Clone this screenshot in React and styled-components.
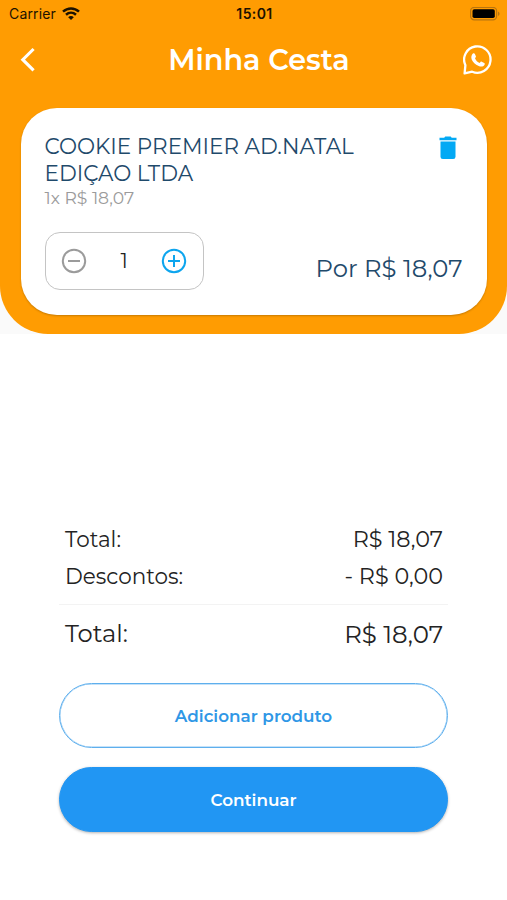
import React, { useState } from 'react'
import styled, { createGlobalStyle } from 'styled-components'

const GlobalStyle = createGlobalStyle`
    * {
        box-sizing: border-box;
    }
    body {
        margin: 0;
        background-color: #fff;
        font-family: Montserrat, Inter, "Open Sans", sans-serif;
    }
    button {
        font-family: inherit;
        padding: 0;
        border: none;
        background: none;
        cursor: pointer;
    }
    svg {
        display: block;
    }
`;

const Container = styled.div`
    width: 507px;
    height: 900px;
    overflow: hidden;
    display: flex;
    flex-direction: column;
`;

/* ---------- HEADER ---------- */
const HeaderArea = styled.div`
    height: 334px;
    background-color: #fafafa;
`;

const Header = styled.header`
    height: 334px;
    background-color: #ff9c02;
    border-radius: 0 0 48px 48px;
`;

const StatusBar = styled.div`
    height: 28px;
    padding: 0 7px 0 9px;
    display: grid;
    grid-template-columns: 1fr auto 1fr;
    align-items: center;
    color: #1c1200;
    font-family: Inter, sans-serif;
    font-size: 14px;
    line-height: 28px;
`;

const Carrier = styled.div`
    display: flex;
    align-items: center;
    gap: 6px;
    letter-spacing: 0.15px;
`;

const Clock = styled.div`
    font-weight: 600;
    letter-spacing: 0.4px;
`;

const Battery = styled.div`
    display: flex;
    justify-content: flex-end;
`;

const NavBar = styled.div`
    height: 80px;
    padding: 0 14px 16px 20px;
    display: grid;
    grid-template-columns: 40px 1fr 40px;
    align-items: center;
`;

const PageTitle = styled.h1`
    margin: 0;
    padding-left: 5px;
    text-align: center;
    color: #fff;
    font-size: 28.6px;
    font-weight: 600;
    line-height: 36px;
`;

const NavButton = styled.button`
    display: flex;
    justify-content: ${props => props.$align};
    color: #fff;
`;

/* ---------- PRODUCT CARD ---------- */
const Card = styled.section`
    width: 466px;
    height: 207px;
    margin: 0 auto;
    padding: 25px 24px;
    display: flex;
    flex-direction: column;
    justify-content: space-between;
    background-color: #fff;
    border-radius: 36px;
    box-shadow: 0 1px 2px rgba(0, 0, 0, 0.22);
`;

const CardTop = styled.div`
    display: flex;
    justify-content: space-between;
    align-items: flex-start;
`;

const ProductName = styled.h2`
    margin: 0;
    color: #1f4a6b;
    font-size: 21.5px;
    font-weight: 400;
    line-height: 27px;
`;

const NameLine = styled.span`
    display: block;
    white-space: nowrap;
`;

const UnitPrice = styled.div`
    color: #9b9b9b;
    font-size: 17.2px;
    line-height: 22px;
`;

const DeleteButton = styled.button`
    padding: 3px 6px 0 0;
`;

const CardBottom = styled.div`
    display: flex;
    justify-content: space-between;
    align-items: center;
`;

const Stepper = styled.div`
    width: 159px;
    height: 58px;
    padding: 0 15px;
    display: flex;
    align-items: center;
    justify-content: space-between;
    border: 1px solid #c4c4c4;
    border-radius: 15px;
`;

const Quantity = styled.span`
    color: #222;
    font-size: 20px;
    line-height: 26px;
`;

const ItemPrice = styled.div`
    padding-top: 14px;
    color: #1f4a6b;
    font-size: 24.3px;
    line-height: 30px;
`;

/* ---------- SUMMARY ---------- */
const Summary = styled.section`
    margin: 186px 59px 0;
`;

const SummaryRow = styled.div`
    height: ${props => (props.$big ? 57 : 37)}px;
    padding: 0 5px 0 6px;
    display: flex;
    align-items: center;
    justify-content: space-between;
    color: #232323;
`;

const Label = styled.span`
    font-size: ${props => (props.$big ? 24.2 : 21.5)}px;
`;

const Value = styled.span`
    font-size: ${props => (props.$big ? 24.4 : 22.3)}px;
`;

const Divider = styled.div`
    height: 1px;
    margin: 10px 0 0;
    background-color: #f3f3f3;
`;

const Actions = styled.div`
    margin: 21px 59px 0;
    display: flex;
    flex-direction: column;
    gap: 19px;
`;

const Button = styled.button`
    && {
        height: 65px;
        padding-top: ${props => (props.$filled ? 1 : 0)}px;
        border: 1px solid ${props => (props.$filled ? '#2196f3' : '#5eafed')};
        border-radius: 33px;
        background-color: ${props => (props.$filled ? '#2196f3' : '#fff')};
        color: ${props => (props.$filled ? '#fff' : '#2f97e6')};
        box-shadow: ${props => (props.$filled ? '0 1px 3px rgba(0, 0, 0, 0.3)' : 'inset 0 0 0 0.5px #8cc6f3')};
        font-size: 16.8px;
        font-weight: 600;
    }
`;

/* ---------- ICONS ---------- */
const WifiIcon = () => (
    <svg width="18" height="14" viewBox="0 0 18 14" fill="none" stroke="#1c1200" strokeWidth="2.5">
        <path d="M1 4.6C5.6 .3 12.4 .3 17 4.600" />
        <path d="M4 7.800c2.900-2.600 7.100-2.600 10 0" />
        <path d="M6.200 10.200c1.600-1.500 4-1.500 5.600 0L9 13.100z" fill="#1c1200" stroke="none" />
    </svg>
)

const BatteryIcon = () => (
    <svg width="30" height="14" viewBox="0 0 30 14">
        <rect x=".6" y=".4" width="26" height="12.4" rx="3.6" fill="none" stroke="#b87510" strokeWidth="1.2" />
        <rect x="2.5" y="2.2" width="22.3" height="8.8" rx="1.8" fill="#000" />
        <path d="M28 4.4c2 .8 2 3.7 0 4.500z" fill="#b87510" />
    </svg>
)

const BackIcon = () => (
    <svg width="16" height="26" viewBox="0 0 16 26" fill="none" stroke="#fff" strokeWidth="3.1">
        <path d="M13.600 2L2.800 12.700l10.800 10.700" />
    </svg>
)

const WhatsAppIcon = () => (
    <svg width="30" height="30" viewBox="0 0 30 30" fill="none" stroke="#fff" strokeWidth="2.3">
        <path d="M1.600 28.400L2.400 20.200A13.200 13.200 0 1 1 9.200 26.700z" strokeLinejoin="round" />
        <path
            d="M9.900 8.600c.7-.7 1.600-.6 2 .3l1 2.300c.2.700-.1 1-.9 2 .9 2.300 2.500 3.800 4.800 4.700.9-1.200 1.200-1.500 1.900-1.200l2.500 1.200c.7.400.7 1.200.2 2.100-1.200 1.700-3.400 1.900-5.700 1-3.600-1.400-5.700-3.700-7-6.500-.8-2.100-.3-4.500 1.200-5.900z"
            fill="#fff"
            stroke="none"
        />
    </svg>
)

const TrashIcon = () => (
    <svg width="18" height="24" viewBox="0 0 18 24" fill="#03a9f4">
        <path d="M.5 1.700h4.700L6.200.4h5.500l1 1.300h4.800v2.500H.5z" />
        <path d="M1.500 5.400h15v15.300a2.300 2.300 0 0 1-2.300 2.300H3.800a2.300 2.300 0 0 1-2.300-2.300z" />
    </svg>
)

const CircleIcon = ({ color, plus }) => (
    <svg width="26" height="26" viewBox="0 0 26 26" fill="none" stroke={color} strokeWidth="2">
        <circle cx="13" cy="13" r="11.2" />
        <path d="M7 13h12" />
        {plus && <path d="M13 7v12" />}
    </svg>
)

const App = () => {
    const [quantity, setQuantity] = useState(1);

    return (
    <Container>
        <GlobalStyle />
        <HeaderArea>
            <Header>
                <StatusBar>
                    <Carrier>Carrier <WifiIcon /></Carrier>
                    <Clock>15:01</Clock>
                    <Battery><BatteryIcon /></Battery>
                </StatusBar>
                <NavBar>
                    <NavButton $align="flex-start" aria-label="Voltar"><BackIcon /></NavButton>
                    <PageTitle>Minha Cesta</PageTitle>
                    <NavButton $align="flex-end" aria-label="WhatsApp"><WhatsAppIcon /></NavButton>
                </NavBar>
                <Card>
                    <CardTop>
                        <div>
                            <ProductName>
                                <NameLine>COOKIE PREMIER AD.NATAL</NameLine>
                                <NameLine>EDIÇAO LTDA</NameLine>
                            </ProductName>
                            <UnitPrice>1x R$ 18,07</UnitPrice>
                        </div>
                        <DeleteButton aria-label="Remover"><TrashIcon /></DeleteButton>
                    </CardTop>
                    <CardBottom>
                        <Stepper>
                            <button aria-label="Menos" onClick={() => setQuantity(Math.max(1, quantity - 1))}>
                                <CircleIcon color="#9b9b9b" />
                            </button>
                            <Quantity>{quantity}</Quantity>
                            <button aria-label="Mais" onClick={() => setQuantity(quantity + 1)}>
                                <CircleIcon color="#0da5ee" plus />
                            </button>
                        </Stepper>
                        <ItemPrice>Por R$ 18,07</ItemPrice>
                    </CardBottom>
                </Card>
            </Header>
        </HeaderArea>
        <Summary>
            <SummaryRow>
                <Label>Total:</Label>
                <Value>R$ 18,07</Value>
            </SummaryRow>
            <SummaryRow>
                <Label>Descontos:</Label>
                <Value>- R$ 0,00</Value>
            </SummaryRow>
            <Divider />
            <SummaryRow $big>
                <Label $big>Total:</Label>
                <Value $big>R$ 18,07</Value>
            </SummaryRow>
        </Summary>
        <Actions>
            <Button>Adicionar produto</Button>
            <Button $filled>Continuar</Button>
        </Actions>
    </Container>
  )
}

export default App
